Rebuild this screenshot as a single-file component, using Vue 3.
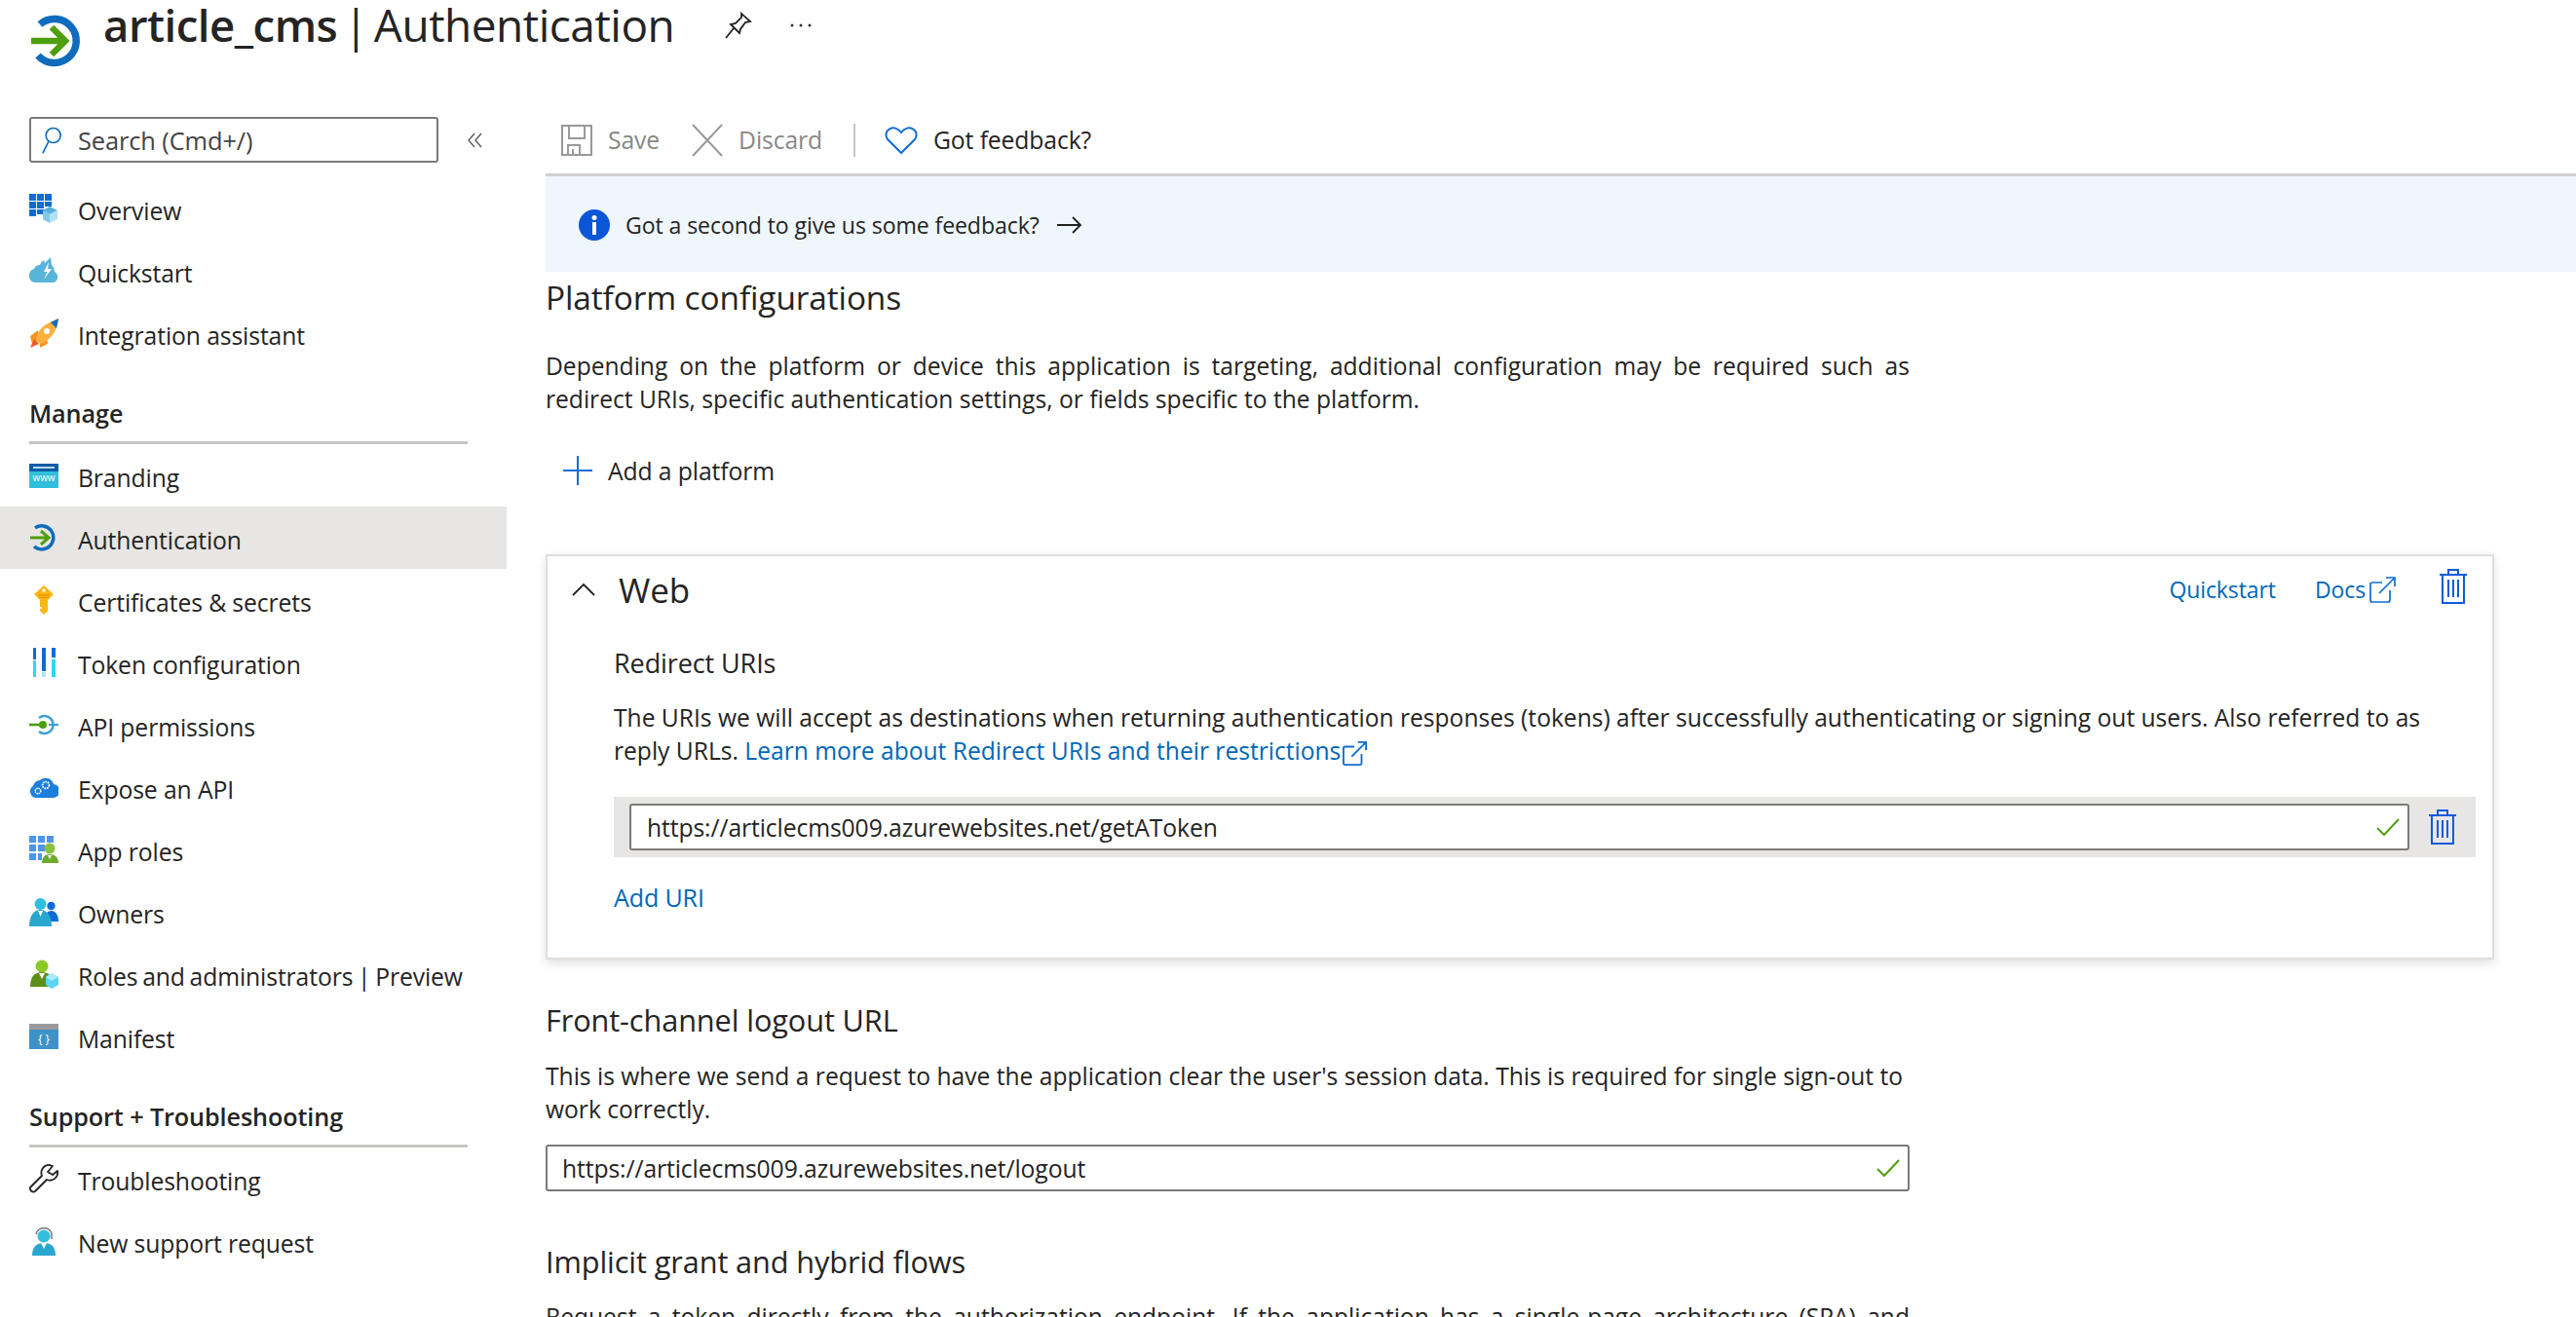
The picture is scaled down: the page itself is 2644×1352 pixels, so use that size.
<script setup>
import { ref } from 'vue';

const redirectUri = ref('https://articlecms009.azurewebsites.net/getAToken');
const logoutUrl = ref('https://articlecms009.azurewebsites.net/logout');
</script>

<template>
  <div class="page">
    <header class="title-bar">
      <svg class="title-icon" viewBox="0 0 52 56">
        <path d="M9 11 A22.5 22.5 0 1 1 7 43" fill="none" stroke="#0f6cbd" stroke-width="7.5" />
        <path d="M0 28H34M21 14L35 28L21 42" fill="none" stroke="#4f9e0f" stroke-width="6.5" />
      </svg>
      <h1 class="title"><b>article_cms</b> | Authentication</h1>
      <svg class="pin" viewBox="0 0 28 28" fill="none" stroke="#222" stroke-width="1.8">
        <path d="M17 2L26 10L21 11L16 18L15 22L6 13L11 12L17 6ZM9 17L1 27" />
      </svg>
      <svg class="more" viewBox="0 0 22 4" fill="#333">
        <circle cx="2" cy="2" r="1.500" />
        <circle cx="11" cy="2" r="1.500" />
        <circle cx="20" cy="2" r="1.500" />
      </svg>
    </header>

    <div class="columns">
      <aside class="sidebar">
        <div class="search-row">
          <div class="search">
            <svg class="search-icon" viewBox="0 0 24 36" fill="none" stroke="#0f6cbd" stroke-width="2">
              <circle cx="14" cy="12" r="9" />
              <path d="M8 20L1 34" />
            </svg>
            <span>Search (Cmd+/)</span>
          </div>
          <svg class="collapse" viewBox="0 0 18 18" fill="none" stroke="#555" stroke-width="1.3">
            <path d="M8 2L2 9L8 16M15 2L9 9L15 16" />
          </svg>
        </div>

        <a class="nav-row">
          <svg class="nav-icon" viewBox="0 0 30 30">
            <path fill="#0f6cd6" d="M0 0h7v7H0zM8 0h7v7H8zM16 0h7v7h-7zM0 8h7v7H0zM8 8h7v7H8zM16 8h7v5h-7zM0 16h7v7H0zM8 16h7v5H8z" />
            <path fill="#5ab0dc" d="M21 13l8 4-8 4-7-4z" />
            <path fill="#b3e0f5" d="M21 21l8-4v9l-8 4z" />
            <path fill="#83c8ea" d="M21 21l-7-4v9l7 4z" />
          </svg>
          <span>Overview</span>
        </a>
        <a class="nav-row">
          <svg class="nav-icon" viewBox="0 0 30 30">
            <path fill="#59b4d9" d="M6 27A6 6 0 0 1 0 21A7 7 0 0 1 5 13A6 6 0 0 1 11 9A8 8 0 0 1 15 4L16 7L22 1L23 9A9 9 0 0 1 26 16A6 6 0 0 1 25 27Z" />
            <path fill="#fff" d="M20 6L15 16H18.500L15 24L23 13H19Z" />
          </svg>
          <span>Quickstart</span>
        </a>
        <a class="nav-row">
          <svg class="nav-icon" viewBox="0 0 30 30">
            <path fill="#f7941d" d="M9 12L1 18L3 26L9 22ZM18 19L19 26L11 30L11 24Z" />
            <path fill="#fcb040" d="M7 23C7 12 16 5 30 0C29 12 23 21 12 26Z" />
            <path fill="#0f6cbd" d="M22 4L30 0L28 10Z" />
            <path fill="#f15a24" d="M5 21L10 26L1 30Z" />
            <circle cx="18" cy="13" r="3" fill="#fff" />
          </svg>
          <span>Integration assistant</span>
        </a>

        <h3 class="nav-heading">Manage</h3>

        <a class="nav-row">
          <svg class="nav-icon" viewBox="0 0 30 30">
            <rect y="3" width="30" height="25" rx="1" fill="#32bedd" />
            <rect y="3" width="30" height="8" rx="1" fill="#0d5ca8" />
            <rect x="4" y="6" width="22" height="2" fill="#b8d8f0" />
            <text x="15" y="21" class="www">www</text>
          </svg>
          <span>Branding</span>
        </a>
        <a class="nav-row active">
          <svg class="nav-icon" viewBox="0 0 30 30">
            <path d="M6 5A12 12 0 1 1 5 24" fill="none" stroke="#0f6cbd" stroke-width="3.500" />
            <path d="M1 15H20M12 8L20 15L12 22" fill="none" stroke="#4f9e0f" stroke-width="3" />
          </svg>
          <span>Authentication</span>
        </a>
        <a class="nav-row">
          <svg class="nav-icon" viewBox="0 0 30 30">
            <path fill="#fcb714" d="M15 0L25 9L19 15V26L15 30L11 26V24H13V22H11V15L5 9Z" />
            <circle cx="15" cy="5" r="1.800" fill="#fff" />
            <path fill="#e8930c" d="M9 9H21V10.500H9ZM10 12H20V13H10Z" />
          </svg>
          <span>Certificates &amp; secrets</span>
        </a>
        <a class="nav-row">
          <svg class="nav-icon" viewBox="0 0 30 30">
            <path fill="#0f6cd6" d="M4 0H7V12H4ZM13 0H17V24H13ZM23 0H27V10H23Z" />
            <path fill="#32d4f5" d="M4 13H7V30H4ZM23 12H27V30H23Z" />
            <path fill="#a6e6f7" d="M13 25H17V30H13Z" />
          </svg>
          <span>Token configuration</span>
        </a>
        <a class="nav-row">
          <svg class="nav-icon" viewBox="0 0 30 30">
            <path d="M20 15H30" stroke="#3f9fd0" stroke-width="2" />
            <path d="M10 8A9 9 0 1 1 10 22" fill="none" stroke="#3f9fd0" stroke-width="2.600" />
            <path d="M0 15H15" stroke="#4f9e0f" stroke-width="2.600" />
            <circle cx="14" cy="15" r="4" fill="#4f9e0f" />
          </svg>
          <span>API permissions</span>
        </a>
        <a class="nav-row">
          <svg class="nav-icon" viewBox="0 0 30 30">
            <path fill="#1c7fdb" d="M7 26A6.500 6.500 0 0 1 4 14A7 7 0 0 1 11 8A8.500 8.500 0 0 1 25 12A7 7 0 0 1 24 26Z" />
            <circle cx="9" cy="19" r="2.800" fill="none" stroke="#fff" stroke-width="1.500" stroke-dasharray="1.500 .7" />
            <circle cx="17" cy="13" r="3.400" fill="none" stroke="#fff" stroke-width="1.800" stroke-dasharray="1.700 .8" />
          </svg>
          <span>Expose an API</span>
        </a>
        <a class="nav-row">
          <svg class="nav-icon" viewBox="0 0 30 30">
            <path fill="#5094ec" d="M0 1h7v7H0zM9 1h7v7H9zM18 1h7v7h-7zM0 10h7v7H0zM9 10h7v7H9zM0 19h7v7H0zM9 19h4v7H9z" />
            <circle cx="21" cy="14" r="5.500" fill="#86c440" />
            <path fill="#6cab2a" d="M13 29C13 23 16 20 21 20C26 20 30 23 30 29Z" />
            <path fill="#fff" d="M19 21H23L21 25Z" />
          </svg>
          <span>App roles</span>
        </a>
        <a class="nav-row">
          <svg class="nav-icon" viewBox="0 0 30 30">
            <circle cx="22.500" cy="9" r="4.200" fill="#0f6cd6" />
            <path fill="#0f6cd6" d="M16 25C16 18 18 14 22.500 14C27 14 30 18 30 25Z" />
            <circle cx="11.500" cy="7" r="6" fill="#32bedd" />
            <path fill="#2aa7cf" d="M0 30C0 20 4 13 11.500 13C19 13 23 20 23 30Z" />
            <path fill="#fff" d="M9 14H14L11.500 20Z" />
          </svg>
          <span>Owners</span>
        </a>
        <a class="nav-row">
          <svg class="nav-icon" viewBox="0 0 30 30">
            <circle cx="13" cy="7" r="6.500" fill="#8bc926" />
            <path fill="#5c8f1a" d="M1 28C1 18 5 13 13 13C21 13 25 18 25 28Z" />
            <path fill="#fff" d="M10 14H16L13 20Z" />
            <path fill="#5ad6f5" d="M23 14L30 18V26L23 30L17 26V18Z" />
            <path fill="#a8ecfb" d="M23 14L30 18L23 22L17 18Z" />
          </svg>
          <span class="tight">Roles and administrators | Preview</span>
        </a>
        <a class="nav-row">
          <svg class="nav-icon" viewBox="0 0 30 30">
            <rect y="2" width="30" height="26" fill="#3d93c8" />
            <rect y="2" width="30" height="6" fill="#9a9a9a" />
            <text x="15" y="22" class="braces">{ }</text>
          </svg>
          <span>Manifest</span>
        </a>

        <h3 class="nav-heading">Support + Troubleshooting</h3>

        <a class="nav-row">
          <svg class="nav-icon" viewBox="0 0 30 30" fill="none" stroke="#222" stroke-width="1.800">
            <path d="M21 1A8 8 0 0 0 13 12L1 24C0 26 3 30 6 28L18 16A8 8 0 0 0 29 7L24 11L19 8L24 2Z" stroke-linejoin="round" />
          </svg>
          <span>Troubleshooting</span>
        </a>
        <a class="nav-row">
          <svg class="nav-icon" viewBox="0 0 30 30">
            <path d="M7 8A8.500 8.500 0 0 1 23 7L23 13" fill="none" stroke="#777" stroke-width="1.500" />
            <circle cx="15" cy="10" r="6.500" fill="#32bedd" />
            <path fill="#2aa7cf" d="M3 30C3 21 7 17 15 17C23 17 27 21 27 30Z" />
            <path fill="#fff" d="M12 17H18L15 23Z" />
          </svg>
          <span>New support request</span>
        </a>
      </aside>

      <main class="content">
        <div class="toolbar">
          <button class="tool-btn disabled">
            <svg class="tool-icon" viewBox="0 0 34 34" fill="none" stroke="#999" stroke-width="2">
              <path d="M2 2H32V32H2ZM9 2V15H25V2M8 32V22H20V32M13 26V32" />
            </svg>
            Save
          </button>
          <button class="tool-btn disabled">
            <svg class="tool-icon" viewBox="0 0 34 34" fill="none" stroke="#999" stroke-width="2">
              <path d="M2 1L32 33M32 1L2 33" />
            </svg>
            Discard
          </button>
          <span class="tool-sep"></span>
          <button class="tool-btn">
            <svg class="tool-icon heart" viewBox="0 0 34 30" fill="none" stroke="#0f6cd6" stroke-width="2">
              <path d="M17 28L3 14C-3 5 10 -3 17 7C24 -3 37 5 31 14Z" />
            </svg>
            Got feedback?
          </button>
        </div>

        <div class="banner">
          <svg class="info" viewBox="0 0 32 32">
            <circle cx="16" cy="16" r="16" fill="#0b56d6" />
            <circle cx="16" cy="8.500" r="2.500" fill="#fff" />
            <rect x="14" y="13" width="4" height="13" fill="#fff" />
          </svg>
          <span>Got a second to give us some feedback?</span>
          <svg class="arrow" viewBox="0 0 26 18" fill="none" stroke="#222" stroke-width="1.800">
            <path d="M0 9H24M16 1L24 9L16 17" />
          </svg>
        </div>

        <h2 class="section-title">Platform configurations</h2>
        <p class="text justified">Depending on the platform or device this application is targeting, additional configuration may be required such as redirect URIs, specific authentication settings, or fields specific to the platform.</p>
        <button class="add-platform">
          <svg viewBox="0 0 30 30" fill="none" stroke="#0f6cd6" stroke-width="2">
            <path d="M15 0V30M0 15H30" />
          </svg>
          Add a platform
        </button>

        <section class="card">
          <div class="card-head">
            <svg class="chevron" viewBox="0 0 24 14" fill="none" stroke="#222" stroke-width="1.800">
              <path d="M1 13L12 2L23 13" />
            </svg>
            <span class="card-title">Web</span>
            <a class="link quick">Quickstart</a>
            <a class="link docs">Docs</a>
            <svg class="ext" viewBox="0 0 28 28" fill="none" stroke="#0f6cd6" stroke-width="1.700">
              <path d="M13 7H3Q1 7 1 9V25Q1 27 3 27H19Q21 27 21 25V15M10 18L26 2M17 2H26V11" />
            </svg>
            <svg class="trash top" viewBox="0 0 28 36" fill="none" stroke="#0d5bdb" stroke-width="2">
              <path d="M0 6H28M9 6V1H19V6M3 6V35H25V6M9 11V29M14 11V29M19 11V29" />
            </svg>
          </div>

          <div class="card-body">
            <h3 class="sub-title redirect-title">Redirect URIs</h3>
            <p class="text">The URIs we will accept as destinations when returning authentication responses (tokens) after successfully authenticating or signing out users. Also referred to as reply URLs. <a class="link">Learn more about Redirect URIs and their restrictions</a><svg class="ext small" viewBox="0 0 28 28" fill="none" stroke="#0f6cd6" stroke-width="2"><path d="M13 7H3Q1 7 1 9V25Q1 27 3 27H19Q21 27 21 25V15M10 18L26 2M17 2H26V11" /></svg></p>

            <div class="uri-row">
              <div class="field">
                <input v-model="redirectUri" />
                <svg class="check" viewBox="0 0 24 18" fill="none" stroke="#4f9e0f" stroke-width="2">
                  <path d="M1 10L8 17L23 1" />
                </svg>
              </div>
              <svg class="trash" viewBox="0 0 28 36" fill="none" stroke="#0d5bdb" stroke-width="2">
                <path d="M0 6H28M9 6V1H19V6M3 6V35H25V6M9 11V29M14 11V29M19 11V29" />
              </svg>
            </div>

            <a class="link add-uri">Add URI</a>
          </div>
        </section>

        <h3 class="sub-title logout-title">Front-channel logout URL</h3>
        <p class="text narrow">This is where we send a request to have the application clear the user's session data. This is required for single sign-out to work correctly.</p>
        <div class="field logout-field">
          <input v-model="logoutUrl" />
          <svg class="check" viewBox="0 0 24 18" fill="none" stroke="#4f9e0f" stroke-width="2">
            <path d="M1 10L8 17L23 1" />
          </svg>
        </div>

        <h3 class="sub-title implicit-title">Implicit grant and hybrid flows</h3>
        <p class="text justified">Request a token directly from the authorization endpoint. If the application has a single-page architecture (SPA) and doesn't use the authorization code flow, or if it invokes a web API via JavaScript, select both access tokens and ID tokens.</p>
      </main>
    </div>
  </div>
</template>

<style>
html, body {
  margin: 0;
  background: #fff;
}
</style>

<style scoped>
.page {
  width: 2644px;
  height: 1352px;
  overflow: hidden;
  font-family: "Open Sans", "Noto Sans", sans-serif;
  font-size: 24.7px;
  letter-spacing: -0.1px;
  color: #252423;
  background: #fff;
}

.title-bar {
  height: 96px;
  display: flex;
  align-items: flex-start;
  padding-left: 32px;
  box-sizing: border-box;
}

.title-icon {
  width: 52px;
  height: 56px;
  margin-top: 14px;
  margin-right: 22px;
}

.title {
  margin: 0;
  font-size: 46px;
  font-weight: 400;
  line-height: 50px;
  letter-spacing: -0.5px;
  word-spacing: -5px;
  white-space: nowrap;
}

.title b {
  font-size: 45.5px;
  font-weight: 600;
}

.pin {
  width: 28px;
  height: 28px;
  margin: 12px 0 0 52px;
}

.more {
  width: 22px;
  height: 4px;
  margin: 24px 0 0 39px;
}

.columns {
  display: flex;
}

.sidebar {
  width: 520px;
  flex-shrink: 0;
  padding-top: 24px;
}

.search-row {
  display: flex;
  align-items: center;
  padding-left: 30px;
  margin-bottom: 15px;
}

.search {
  width: 420px;
  height: 47px;
  box-sizing: border-box;
  border: 2px solid #7a7a7a;
  border-radius: 3px;
  display: flex;
  align-items: center;
  color: #444;
  font-size: 25.4px;
}

.search-icon {
  width: 22px;
  height: 30px;
  margin: 0 16px 0 10px;
}

.collapse {
  width: 18px;
  height: 18px;
  margin-left: 29px;
}

.nav-row {
  height: 64px;
  display: flex;
  align-items: center;
  padding-left: 30px;
  white-space: nowrap;
}

.nav-row span {
  padding-top: 4px;
}

.nav-row .tight {
  word-spacing: -1.6px;
}

.nav-row.active {
  background: #e8e6e4;
}

.nav-icon {
  width: 30px;
  height: 30px;
  margin-right: 20px;
  flex-shrink: 0;
}

.www {
  font-size: 10px;
  fill: #fff;
  text-anchor: middle;
}

.braces {
  font-size: 12px;
  fill: #fff;
  text-anchor: middle;
}

.nav-heading {
  height: 82px;
  box-sizing: border-box;
  margin: 0 40px 0 30px;
  padding-top: 32px;
  border-bottom: 3px solid #c8c6c4;
  font-size: 25.2px;
  font-weight: 600;
  line-height: 36px;
}

.content {
  flex: 1;
  min-width: 0;
  padding-left: 40px;
}

.toolbar {
  height: 85px;
  box-sizing: border-box;
  display: flex;
  align-items: center;
  border-bottom: 3px solid #d2d0ce;
  padding: 13px 0 0 15px;
}

.tool-btn {
  display: flex;
  align-items: center;
  border: none;
  background: none;
  padding: 0;
  font: inherit;
  letter-spacing: inherit;
  color: inherit;
}

.tool-btn.disabled {
  color: #8a8886;
  margin-right: 32px;
}

.tool-icon {
  width: 34px;
  height: 34px;
  margin-right: 15px;
}

.heart {
  margin-right: 16px;
}

.tool-sep {
  width: 2px;
  height: 34px;
  background: #c8c6c4;
  margin-right: 30px;
}

.banner {
  height: 98px;
  box-sizing: border-box;
  padding: 2px 0 0 34px;
  display: flex;
  align-items: center;
  background: #eff6fc;
  font-size: 23.1px;
}

.info {
  width: 32px;
  height: 32px;
  margin-right: 16px;
}

.arrow {
  width: 26px;
  height: 18px;
  margin-left: 18px;
}

.section-title {
  margin: 0;
  padding-top: 3px;
  font-size: 33.4px;
  font-weight: 400;
  line-height: 46px;
}

.text {
  margin: 0;
  font-size: 24.6px;
  letter-spacing: 0;
  line-height: 34px;
}

.justified {
  width: 1400px;
  margin-top: 31px;
  text-align: justify;
}

.add-platform {
  display: flex;
  align-items: center;
  margin: 27px 0 0 18px;
  padding: 0;
  height: 58px;
  border: none;
  background: none;
  font: inherit;
  letter-spacing: inherit;
  color: inherit;
}

.add-platform svg {
  width: 30px;
  height: 30px;
  margin-right: 16px;
}

.card {
  width: 2000px;
  height: 416px;
  box-sizing: border-box;
  margin-top: 57px;
  border: 2px solid #e1dfdd;
  box-shadow: 0 4px 10px rgba(0, 0, 0, 0.12);
}

.card-head {
  height: 68px;
  display: flex;
  align-items: center;
  padding-left: 25px;
  padding-right: 26px;
}

.chevron {
  width: 24px;
  height: 14px;
  margin-right: 24px;
}

.card-title {
  font-size: 35px;
  flex: 1;
}

.quick,
.docs {
  font-size: 23px;
}

.quick {
  margin-right: 40px;
}

.ext {
  width: 28px;
  height: 28px;
  margin-left: 4px;
  margin-right: 44px;
}

.ext.small {
  width: 26px;
  height: 26px;
  margin: 0 0 -6px 2px;
}

.trash {
  width: 28px;
  height: 36px;
  flex-shrink: 0;
}

.trash.top {
  margin-bottom: 6px;
}

.card-body {
  padding: 22px 17px 0 68px;
}

.card-body .text {
  max-width: 1870px;
}

.sub-title {
  margin: 0;
  font-size: 30.7px;
  font-weight: 400;
  line-height: 40px;
}

.redirect-title {
  font-size: 27px;
  margin-bottom: 19px;
}

.link {
  color: #0067b8;
}

.uri-row {
  height: 62px;
  display: flex;
  align-items: center;
  margin-top: 30px;
  padding: 0 20px 0 16px;
  background: #e8e6e4;
}

.field {
  position: relative;
  flex: 1;
  height: 48px;
  box-sizing: border-box;
  border: 2px solid #7a7a7a;
  border-radius: 3px;
  background: #fff;
  margin-right: 20px;
}

.field input {
  width: 100%;
  height: 100%;
  box-sizing: border-box;
  border: none;
  outline: none;
  background: none;
  padding: 0 50px 0 16px;
  font: inherit;
  letter-spacing: inherit;
  color: inherit;
}

.check {
  position: absolute;
  right: 8px;
  top: 13px;
  width: 24px;
  height: 18px;
}

.add-uri {
  display: block;
  margin-top: 23px;
  font-size: 25px;
  line-height: 36px;
}

.logout-title {
  margin-top: 42px;
}

.narrow {
  width: 1400px;
  margin-top: 21px;
}

.logout-field {
  width: 1400px;
  flex: none;
  margin-top: 19px;
}

.logout-field input {
  padding-left: 15px;
}

.implicit-title {
  margin-top: 52px;
}

.implicit-title + .justified {
  margin-top: 20px;
}
</style>
